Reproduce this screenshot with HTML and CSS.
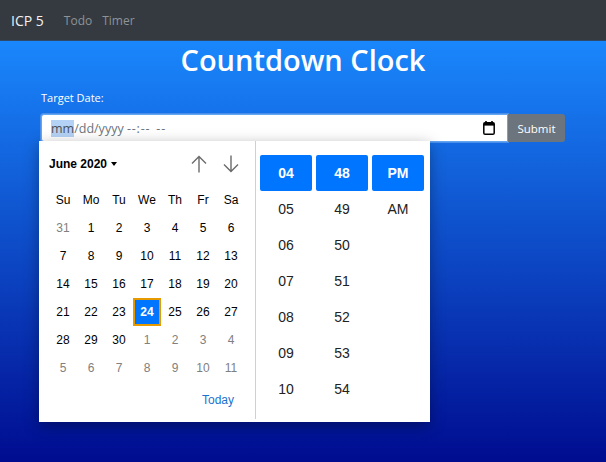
FILE: index.html
```html
<!DOCTYPE html>
<html lang="en">

<head>
    <meta charset="UTF-8">
    <title>Countdown Clock</title>
    <link rel="stylesheet" href="styles.css">
</head>

<body>
<nav class="navbar">
    <a class="brand">ICP 5</a>
    <a class="nav-link">Todo</a>
    <a class="nav-link">Timer</a>
</nav>
<main class="content">
    <h1 class="title">Countdown Clock</h1>
    <p class="field-label">Target Date:</p>
    <div class="input-row">
        <div class="date-input">
            <span class="date-text"><span class="date-selected">mm</span>/dd/yyyy <span class="time-text">--:-- --</span></span>
            <svg class="calendar-icon" width="12" height="14" viewBox="0 0 12 14">
                <path d="M3 0v2M9 0v2" stroke="#000" stroke-width="1.6" fill="none"/>
                <rect x="0.8" y="1.8" width="10.4" height="11.4" rx="1.3" fill="none" stroke="#000" stroke-width="1.5"/>
                <rect x="0.8" y="1.8" width="10.4" height="2.8" fill="#000"/>
            </svg>
        </div>
        <button class="btn-submit">Submit</button>
    </div>
    <div class="picker">
        <div class="calendar">
            <div class="cal-header">
                <span class="month">June 2020 <span class="caret"></span></span>
                <span class="arrows">
                    <svg width="16" height="18" viewBox="0 0 16 18">
                        <path d="M8 17.5V1.5M1 8.5l7-7 7 7" fill="none" stroke="#6b6b6b" stroke-width="1.4"/>
                    </svg>
                    <svg width="16" height="18" viewBox="0 0 16 18">
                        <path d="M8 0.5v16M1 9.5l7 7 7-7" fill="none" stroke="#6b6b6b" stroke-width="1.4"/>
                    </svg>
                </span>
            </div>
            <div class="days">
                <span class="dow">Su</span><span class="dow">Mo</span><span class="dow">Tu</span><span class="dow">We</span><span class="dow">Th</span><span class="dow">Fr</span><span class="dow">Sa</span>
                <span class="muted">31</span><span>1</span><span>2</span><span>3</span><span>4</span><span>5</span><span>6</span>
                <span>7</span><span>8</span><span>9</span><span>10</span><span>11</span><span>12</span><span>13</span>
                <span>14</span><span>15</span><span>16</span><span>17</span><span>18</span><span>19</span><span>20</span>
                <span>21</span><span>22</span><span>23</span><span class="today">24</span><span>25</span><span>26</span><span>27</span>
                <span>28</span><span>29</span><span>30</span><span class="muted">1</span><span class="muted">2</span><span class="muted">3</span><span class="muted">4</span>
                <span class="muted">5</span><span class="muted">6</span><span class="muted">7</span><span class="muted">8</span><span class="muted">9</span><span class="muted">10</span><span class="muted">11</span>
            </div>
            <div class="cal-footer"><a class="today-link">Today</a></div>
        </div>
        <div class="time">
            <div class="time-col">
                <span class="on">04</span><span>05</span><span>06</span><span>07</span><span>08</span><span>09</span><span>10</span>
            </div>
            <div class="time-col">
                <span class="on">48</span><span>49</span><span>50</span><span>51</span><span>52</span><span>53</span><span>54</span>
            </div>
            <div class="time-col">
                <span class="on">PM</span><span>AM</span>
            </div>
        </div>
    </div>
</main>
</body>

</html>
```

FILE: styles.css
```css
html, body {
    height: 100%;
}

body {
    margin: 0;
    font-family: 'Open Sans', 'Noto Sans', sans-serif;
    color: #fff;
    display: flex;
    flex-direction: column;
    overflow: hidden;
    background: #001090;
}

.navbar {
    height: 41px;
    flex: none;
    display: flex;
    align-items: center;
    padding-left: 11px;
    background-color: #343a40;
    border-bottom: 1px solid #2d4a6b;
    box-sizing: border-box;
    font-size: 12px;
}

.brand {
    font-size: 14px;
    color: #f2f2f2;
    margin-right: 20px;
}

.nav-link {
    color: #8f9296;
    margin-right: 10px;
}

.content {
    flex: 1;
    position: relative;
    padding: 0 41px;
    background: linear-gradient(#1a87fc, #000c90);
}

.title {
    margin: 0;
    text-align: center;
    font-size: 29px;
    line-height: 38px;
    font-weight: 600;
}

.field-label {
    margin: 11px 0 0;
    font-size: 11px;
    line-height: 16px;
}

.input-row {
    display: flex;
    margin-top: 8px;
    width: 524px;
    height: 28px;
}

.date-input {
    width: 467px;
    box-sizing: border-box;
    display: flex;
    align-items: center;
    justify-content: space-between;
    padding: 0 12px 0 9px;
    background: #fff;
    border: 1px solid #63a4f3;
    border-radius: 3px 0 0 3px;
    box-shadow: 0 0 0 1px #4a90ea;
    color: #6c757d;
    font-size: 12.5px;
}

.date-selected {
    background: #b4d2f5;
    color: #495057;
}

.time-text {
    letter-spacing: 0.8px;
    word-spacing: 2px;
}

.calendar-icon {
    flex: none;
}

.btn-submit {
    width: 57px;
    padding: 0;
    border: 0;
    border-radius: 0 3px 3px 0;
    background: #6c757d;
    color: #fff;
    font-family: inherit;
    font-size: 11.5px;
    font-weight: 500;
}

/* popup sits over the page */
.picker {
    position: absolute;
    left: 39px;
    top: 100px;
    width: 391px;
    height: 281px;
    display: flex;
    background: #fff;
    color: #000;
    font-family: 'Liberation Sans', Arial, sans-serif;
    box-shadow: 0 4px 14px rgba(0, 0, 0, 0.35);
}

.calendar {
    width: 217px;
    height: 278px;
    box-sizing: border-box;
    flex: none;
    border-right: 1px solid #d0d0d0;
    padding: 0 10px;
    display: flex;
    flex-direction: column;
}

.cal-header {
    height: 45px;
    display: flex;
    align-items: center;
    justify-content: space-between;
    padding-right: 6px;
}

.month {
    font-size: 12px;
    font-weight: bold;
}

.caret {
    display: inline-block;
    margin-left: 1px;
    vertical-align: 2px;
    border: 3.5px solid transparent;
    border-top: 4px solid #000;
    border-bottom: 0;
}

.arrows {
    display: flex;
    gap: 16px;
}

.days {
    display: grid;
    grid-template-columns: repeat(7, 28px);
    grid-auto-rows: 28px;
    font-size: 12px;
    text-align: center;
    line-height: 28px;
}

.muted {
    color: #808080;
}

.today {
    box-sizing: border-box;
    background: #0075ff;
    border: 2px solid #e59a00;
    color: #fff;
    font-weight: bold;
    line-height: 24px;
}

.cal-footer {
    text-align: right;
    padding: 8px 11px 0 0;
}

.today-link {
    color: #1a73d0;
    font-size: 12px;
}

.time {
    display: flex;
    gap: 4px;
    padding: 14px 0 0 4px;
}

.time-col {
    width: 52px;
    display: flex;
    flex-direction: column;
    text-align: center;
    font-size: 14px;
    color: #222;
}

.time-col span {
    height: 36px;
    line-height: 36px;
}

.time-col .on {
    background: #0075ff;
    border-radius: 2px;
    color: #fff;
    font-weight: bold;
}
```
